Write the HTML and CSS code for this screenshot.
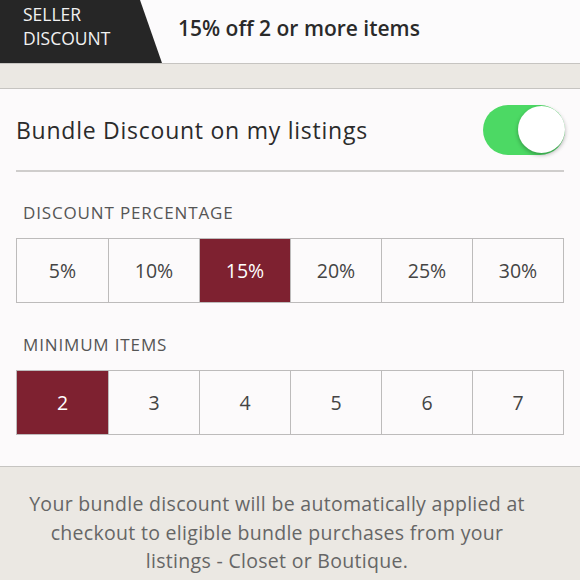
FILE: index.html
```html
<!DOCTYPE html>
<html lang="en">
  <head>
    <meta charset="UTF-8">
    <meta name="viewport" content="width=device-width, initial-scale=1.0">
    <title>Seller Discount</title>
    <link rel="stylesheet" href="styles.css">
  </head>
  <body>
    <header class="top">
      <div class="tab">SELLER<br>DISCOUNT</div>
      <div class="summary">15% off 2 or more items</div>
    </header>
    <div class="band"></div>
    <section class="panel">
      <div class="switch-row">
        <span>Bundle Discount on my listings</span>
        <div class="toggle on"><div class="knob"></div></div>
      </div>
      <div class="label">DISCOUNT PERCENTAGE</div>
      <div class="seg">
        <div class="cell">5%</div>
        <div class="cell">10%</div>
        <div class="cell active">15%</div>
        <div class="cell">20%</div>
        <div class="cell">25%</div>
        <div class="cell">30%</div>
      </div>
      <div class="label second">MINIMUM ITEMS</div>
      <div class="seg">
        <div class="cell active">2</div>
        <div class="cell">3</div>
        <div class="cell">4</div>
        <div class="cell">5</div>
        <div class="cell">6</div>
        <div class="cell">7</div>
      </div>
    </section>
    <p class="note">Your bundle discount will be automatically applied at checkout to eligible bundle purchases from your listings - Closet or Boutique.</p>
  </body>
</html>
```

FILE: styles.css
```css
body { margin: 0; font-family: "Open Sans", "Lato", sans-serif; background: #ebe8e3; color: #333; }
.top { display: flex; align-items: center; height: 63px; background: #fcfbfc; border-bottom: 1px solid #c6c4c1; }
.tab { width: 162px; height: 63px; padding: 2px 0 0 23px; box-sizing: border-box; background: #262626; color: #f2f2f2; font-size: 17.5px; line-height: 24px; clip-path: polygon(0 0, 140px 0, 162px 100%, 0 100%); }
.summary { margin-left: 16px; margin-top: -7px; font-size: 21px; font-weight: 600; color: #2a2a2a; }
.band { height: 24px; }
.panel { background: #fcfafb; border-top: 1px solid #c6c4c1; border-bottom: 1px solid #c6c4c1; padding: 0 16px 31px; }
.switch-row { display: flex; align-items: center; justify-content: space-between; height: 81px; border-bottom: 2px solid #cfcdcc; font-size: 23px; letter-spacing: 0.75px; color: #2b2b2b; }
.toggle { width: 82px; height: 50px; border-radius: 25px; background: #4cd964; position: relative; margin-right: -1px; }
.toggle .knob { position: absolute; right: 0; top: 1px; width: 47px; height: 47px; border-radius: 50%; background: #fff; box-shadow: 0 2px 4px rgba(0,0,0,0.3); }
.label { padding: 32px 0 16px 7px; font-size: 17px; letter-spacing: 0.85px; color: #555; line-height: 18px; }
.label.second { padding-top: 33px; }
.seg { display: grid; grid-template-columns: repeat(6, 1fr); height: 65px; border: 1px solid #bdbbbb; box-sizing: border-box; }
.cell { display: flex; align-items: center; justify-content: center; font-size: 19.5px; color: #444; border-left: 1px solid #bdbbbb; }
.cell:first-child { border-left: none; }
.cell.active { background: #7e2130; color: #fff; }
.note { margin: 0; padding: 23px 48px 0 22px; text-align: center; font-size: 19.5px; letter-spacing: 0.3px; line-height: 28.5px; color: #666; }
```
